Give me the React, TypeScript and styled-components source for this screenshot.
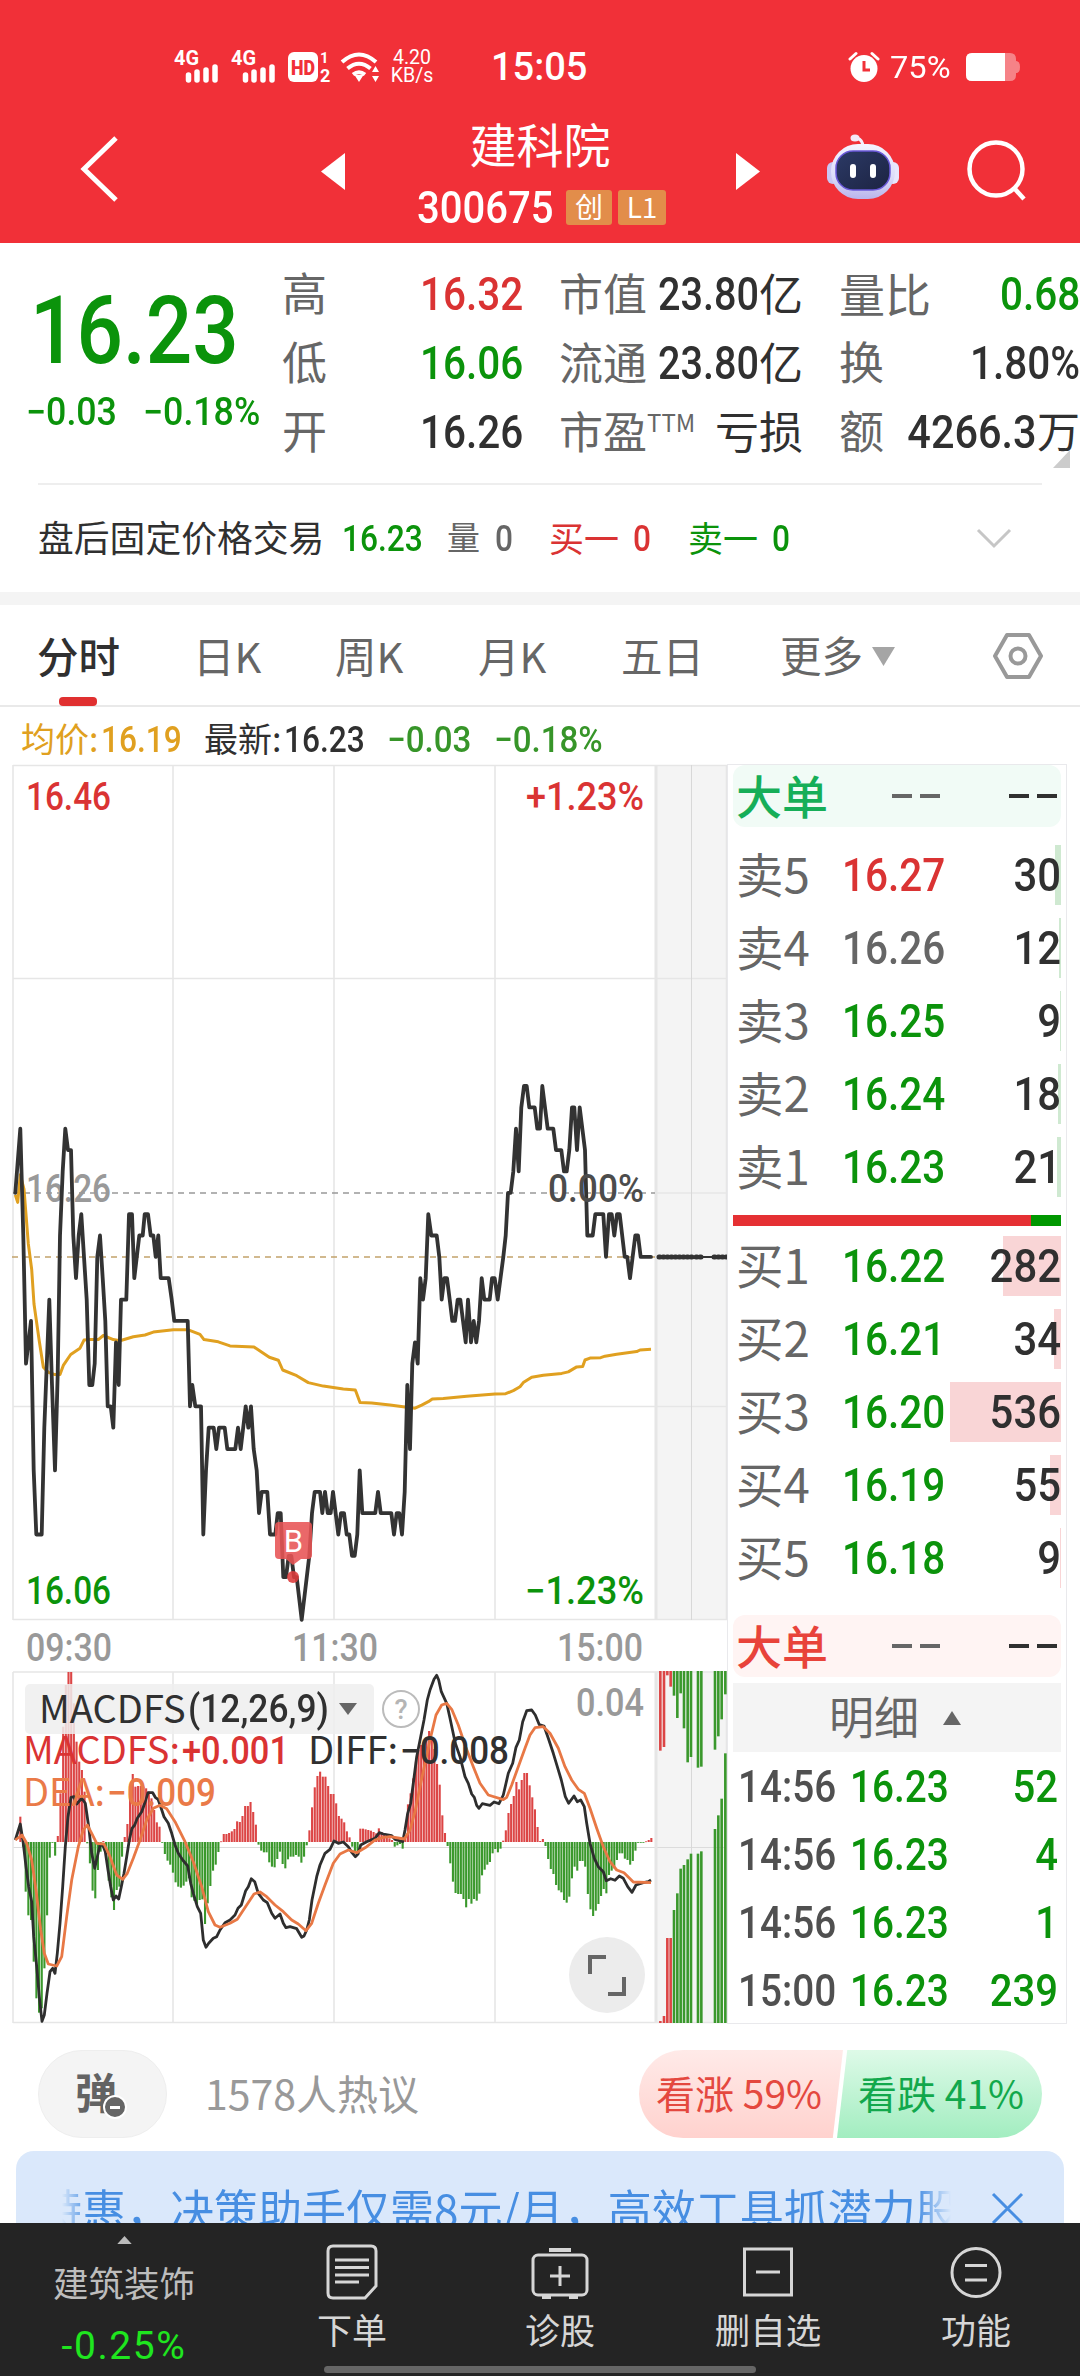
import React from "react";
import styled, { createGlobalStyle, css } from "styled-components";

const RED = "#da3333";
const GREEN = "#0b930b";
const INK = "#303030";
const GREY = "#666666";
const CJK = `"Noto Sans CJK SC", "Noto Sans", sans-serif`;
const NUM = `Roboto, "Noto Sans CJK SC", sans-serif`;

const Global = createGlobalStyle`
  * { box-sizing: border-box; }
  body { margin: 0; background: #fff; }
`;

const Page = styled.div`
  width: 1080px;
  height: 2376px;
  overflow: hidden;
  display: flex;
  flex-direction: column;
  background: #fff;
  color: ${INK};
  font-family: ${CJK};
  white-space: nowrap;
`;

/* ---------- text primitives ---------- */

type TextProps = { $size: number; $color?: string; $ml?: number; $weight?: number; $w?: number };

const Text = styled.span<TextProps>`
  display: block;
  flex: none;
  font-size: ${(p) => p.$size}px;
  line-height: 1;
  color: ${(p) => p.$color ?? "inherit"};
  margin-left: ${(p) => p.$ml ?? 0}px;
  font-weight: ${(p) => p.$weight ?? 400};
  transform: translateY(-0.05em);
  ${(p) => p.$w !== undefined && css`width: ${p.$w}px;`}
`;

const Num = styled(Text)<{ $right?: boolean; $stretch?: number }>`
  font-family: ${NUM};
  font-weight: ${(p) => p.$weight ?? 500};
  text-align: ${(p) => (p.$right ? "right" : "left")};
  transform: scaleX(${(p) => p.$stretch ?? 0.88});
  transform-origin: ${(p) => (p.$right ? "right" : "left")} center;
`;

/* ---------- header ---------- */

const Header = styled.header`
  flex: none;
  height: 243px;
  background: #f13038;
  color: #fff;
`;

const StatusBar = styled.div`
  display: flex;
  align-items: center;
  height: 97px;
  padding: 36px 0 0 172px;
`;

const NetSpeed = styled.div`
  display: flex;
  flex-direction: column;
  align-items: center;
  width: 46px;
  margin-left: 5px;
  font: 400 19.5px/18px Roboto, sans-serif;
`;

const NavBar = styled.div`
  display: flex;
  height: 146px;
  align-items: flex-start;
`;

const NavIcon = styled.svg<{ $ml: number; $mt: number }>`
  display: block;
  flex: none;
  margin: ${(p) => p.$mt}px 0 0 ${(p) => p.$ml}px;
`;

const TitleBlock = styled.div`
  width: 390px;
  height: 146px;
  display: flex;
  flex-direction: column;
  align-items: center;
  padding-top: 24px;
`;

const CodeLine = styled.div`
  display: flex;
  align-items: center;
  height: 36px;
  width: 248px;
  margin: 21px 0 0 2px;
`;

const Tag = styled.span<{ $w: number }>`
  flex: none;
  width: ${(p) => p.$w}px;
  height: 35px;
  margin-right: 6px;
  border-radius: 3px;
  background: #e28d4a;
  font-size: 28px;
  line-height: 33px;
  text-align: center;
`;

/* ---------- quote ---------- */

const Quote = styled.section`
  flex: none;
  height: 240px;
  display: flex;
  padding-top: 16px;
`;

const PriceBlock = styled.div`
  width: 280px;
  padding: 25px 0 0 26px;
  color: ${GREEN};
`;

const Deltas = styled.div`
  display: flex;
  margin-top: 15px;
`;

const StatColumn = styled.div<{ $w: number; $ml: number }>`
  width: ${(p) => p.$w}px;
  margin-left: ${(p) => p.$ml}px;
  flex: none;
`;

const StatRow = styled.div`
  height: 69px;
  display: flex;
  align-items: center;
  justify-content: space-between;
`;

const Pair = styled.div`
  display: flex;
  align-items: center;
`;

const Sup = styled.sup`
  font-size: 24px;
  line-height: 0;
  vertical-align: 17px;
  color: ${GREY};
`;

const CornerMark = styled.i`
  flex: none;
  align-self: flex-end;
  margin: 0 0 15px -27px;
  border-left: 17px solid transparent;
  border-bottom: 18px solid #ccc;
`;

const AfterHours = styled.section`
  flex: none;
  height: 109px;
  margin: 0 38px;
  border-top: 2px solid #eee;
  display: flex;
  align-items: center;
`;

const Band = styled.div`
  flex: none;
  height: 13px;
  background: #f4f4f4;
`;

/* ---------- tabs ---------- */

const Tabs = styled.nav`
  flex: none;
  height: 102px;
  border-bottom: 2px solid #e9e9e9;
  display: flex;
  padding-left: 37px;
`;

const Tab = styled.div<{ $w: number; $active?: boolean }>`
  width: ${(p) => p.$w}px;
  height: 101px;
  flex: none;
  font-size: 41.5px;
  line-height: 40px;
  color: ${(p) => (p.$active ? INK : GREY)};
  font-weight: ${(p) => (p.$active ? 500 : 400)};
  padding-top: 30px;
  &::after {
    content: "";
    display: ${(p) => (p.$active ? "block" : "none")};
    width: 38px;
    height: 9px;
    border-radius: 4px;
    margin: 22px 0 0 22px;
    background: #e03030;
  }
`;

const MoreTab = styled.div`
  display: flex;
  align-items: center;
  width: 213px;
  height: 103px;
`;

const Legend = styled.div`
  flex: none;
  height: 57px;
  display: flex;
  align-items: center;
  padding: 9px 0 0 21px;
`;

/* ---------- market body ---------- */

const Body = styled.main`
  flex: none;
  display: flex;
  height: 1259px;
`;

const Charts = styled.div`
  width: 727px;
  flex: none;
`;

const Canvas = styled.svg`
  display: block;
  text { font-family: ${NUM}; font-weight: 500; }
  text.word { font-family: ${CJK}; font-weight: 400; }
`;

const MacdBox = styled.div`
  position: relative;
`;

const IndicatorChip = styled.div`
  position: absolute;
  left: 25px;
  top: 13px;
  width: 349px;
  height: 50px;
  border-radius: 5px;
  background: rgba(238, 238, 238, 0.85);
  display: flex;
  align-items: center;
  padding-left: 14px;
`;

const ExpandButton = styled.button`
  position: absolute;
  left: 569px;
  top: 266px;
  width: 76px;
  height: 76px;
  padding: 0;
  border: 0;
  border-radius: 50%;
  background: #ececec;
`;

const Panel = styled.aside`
  width: 340px;
  height: 1260px;
  flex: none;
  border: 1px solid #e9e9ec;
  padding: 0 5px;
  display: flex;
  flex-direction: column;
`;

const BigOrder = styled.div<{ $tone: string; $bg: string; $mt: number }>`
  height: 62px;
  flex: none;
  margin-top: ${(p) => p.$mt}px;
  border-radius: 12px;
  background: ${(p) => p.$bg};
  color: ${(p) => p.$tone};
  display: flex;
  align-items: center;
  padding: 0 4px 0 3px;
`;

const Dashes = styled.span<{ $color: string; $ml: number }>`
  width: 48px;
  height: 4px;
  margin-left: ${(p) => p.$ml}px;
  background: linear-gradient(90deg, ${(p) => p.$color} 0 20px, transparent 20px 28px, ${(p) => p.$color} 28px);
`;

const Levels = styled.div<{ $mt: number }>`
  flex: none;
  margin-top: ${(p) => p.$mt}px;
`;

const Level = styled.div<{ $bar: number; $tone: string }>`
  height: 60px;
  margin-bottom: 13px;
  display: flex;
  align-items: center;
  padding-left: 3px;
  background: linear-gradient(${(p) => p.$tone}, ${(p) => p.$tone}) right / ${(p) => p.$bar}px 100% no-repeat;
`;

const Ratio = styled.div`
  flex: none;
  height: 11px;
  margin-top: 5px;
  background: linear-gradient(90deg, #e53033 0 298px, #009700 298px);
`;

const DetailHead = styled.div`
  flex: none;
  height: 69px;
  margin-top: 6px;
  background: #f4f4f4;
  color: ${GREY};
  display: flex;
  align-items: center;
  padding-left: 96px;
`;

const Tick = styled.div`
  flex: none;
  height: 68px;
  display: flex;
  align-items: center;
  padding: 2px 3px 0 5px;
`;

/* ---------- social and promo ---------- */

const Social = styled.section`
  flex: none;
  height: 128px;
  display: flex;
  padding: 27px 38px 0;
`;

const DanmuButton = styled.button`
  width: 129px;
  height: 88px;
  border: 1px solid #eee;
  border-radius: 44px;
  background: #f4f4f4;
  padding: 0 10px 6px 0;
  display: flex;
  align-items: center;
  justify-content: center;
  font: 700 42px/1 ${CJK};
  color: #636363;
`;

const MinusBadge = styled.i`
  width: 24px;
  height: 24px;
  margin: 32px -7px 0 -14px;
  border-radius: 50%;
  border: 2px solid #fff;
  background: linear-gradient(#fff, #fff) center / 10px 3px no-repeat, #666;
`;

const DiscussText = styled.span`
  margin-left: 38px;
  font-size: 41px;
  line-height: 84px;
  color: #999;
`;

const Votes = styled.div`
  display: flex;
  margin-left: auto;
  width: 403px;
  height: 88px;
`;

const Vote = styled.div<{ $up?: boolean }>`
  display: flex;
  align-items: center;
  flex: none;
  height: 88px;
  ${(p) =>
    p.$up
      ? css`
          width: 204px;
          padding-left: 17px;
          border-radius: 44px 0 0 44px;
          color: #e4483f;
          background: linear-gradient(#ffeae8, #ffd2ce);
          clip-path: polygon(0 0, 100% 0, 95% 100%, 0 100%);
        `
      : css`
          width: 205px;
          margin-left: -6px;
          padding-left: 21px;
          border-radius: 0 44px 44px 0;
          color: #12a84c;
          background: linear-gradient(#defae8, #a2edc0);
          clip-path: polygon(5% 0, 100% 0, 100% 100%, 0 100%);
        `}
`;

const Promo = styled.section`
  flex: none;
  height: 72px;
  margin: 0 16px;
  border-radius: 18px 18px 0 0;
  background: #dae8fb;
  display: flex;
  overflow: hidden;
`;

const Marquee = styled.div`
  width: 890px;
  height: 100px;
  margin: 35px 0 0 46px;
  overflow: hidden;
  display: flex;
  color: #478ee2;
  font-size: 44px;
  line-height: 44px;
  text-indent: -24px;
  mask-image: linear-gradient(90deg, transparent, #000 26px, #000 855px, transparent 889px);
`;

/* ---------- bottom bar ---------- */

const BottomBar = styled.footer`
  flex: none;
  height: 153px;
  background: #242424;
  color: #d6d6d6;
  display: flex;
  flex-direction: column;
  align-items: center;
`;

const BottomItems = styled.div`
  display: flex;
  width: 1080px;
  height: 143px;
`;

const Sector = styled.div`
  width: 248px;
  display: flex;
  flex-direction: column;
  align-items: center;
  padding-top: 13px;
  color: #bdbdbd;
`;

const SectorName = styled.span`
  margin: 20px 0 26px;
  font-size: 35.5px;
  line-height: 36px;
`;

const SectorChange = styled.span`
  font: 400 39px/40px Roboto, sans-serif;
  letter-spacing: 1.6px;
  color: #1fe61f;
`;

const Action = styled.div<{ $w: number }>`
  width: ${(p) => p.$w}px;
  display: flex;
  flex-direction: column;
  align-items: center;
  padding-top: 21px;
  svg { display: block; margin-bottom: 13px; }
`;

const HomeIndicator = styled.div`
  width: 432px;
  height: 7px;
  border-radius: 4px;
  background: #666;
`;

/* ---------- data ---------- */

type Pt = [number, number];
const pairs = (s: string): Pt[] =>
  s.trim().split(/\s+/).map((p) => p.split(",").map(Number) as Pt);

// x in thirds of a pixel, y in price ticks from the previous close
const PRICE = pairs(`46,0 61,3 70,-2 78,-8 93,-6 101,-13 109,-16 125,-16 133,-11 148,-5 156,-9 165,-13 173,-8.5 180,-2
188,1 196,3 204,2 213,2 220,-2 228,-4 236,-2 244,-1 252,-3 260,-5 268,-9 277,-9 284,-8 292,-3 300,-2 308,-4 316,-6
323,-10 332,-10 340,-11 348,-7 356,-9 363,-5 379,-5 387,-1 396,-1 403,-4 418,-2 428,-2 434,-1 444,-1 452,-2 460,-2
467,-3 475,-2 482,-4 506,-4 515,-5 523,-6 563,-6 570,-10 577,-9 586,-10 603,-10 610,-16 618,-13 626,-11 641,-11
649,-12 657,-11 674,-11 682,-12 706,-12 714,-11 722,-12 737,-10 745,-11 753,-10 761,-12 770,-13 777,-15 785,-14
802,-14 810,-16 826,-16 833,-15 842,-15 850,-18 858,-18 866,-17 874,-17 882,-18 890,-18 905,-20 928,-17 936,-15
944,-14 960,-14 967,-15 975,-14 983,-15 992,-15 999,-14 1015,-16 1023,-15 1032,-15 1040,-16 1048,-16 1056,-17
1064,-17 1072,-16 1079,-13 1087,-15 1126,-15 1134,-14 1142,-15 1174,-15 1182,-16 1190,-15 1198,-15 1206,-16 1214,-14
1222,-9 1230,-12 1237,-8 1245,-7 1253,-8 1261,-4 1269,-5 1277,-4 1285,-1 1294,-2 1310,-2 1318,-3 1325,-5 1333,-4
1341,-4 1349,-5 1357,-6 1365,-6 1373,-5 1381,-5 1397,-7 1404,-5 1413,-7 1421,-6 1429,-7 1437,-6 1445,-4 1453,-5
1469,-5 1476,-4 1484,-4 1493,-5 1510,-3 1517,-2 1524,0 1532,0 1540,1 1548,3 1556,1 1564,4 1572,5 1580,5 1588,4
1604,4 1612,3 1620,3 1627,5 1643,3 1660,3 1668,2 1684,2 1692,1 1700,1 1708,2 1716,4 1723,4 1731,2 1739,4 1755,2
1762,-2 1778,-2 1786,-1 1810,-1 1818,-3 1827,-1 1835,-1 1843,-2 1851,-1 1859,-1 1874,-3 1882,-3 1890,-4 1906,-2
1914,-2 1922,-3 1953,-3`);

const AVERAGE: Pt[] = [
  ...pairs(`46,775 53,788 61,740 72,765 85,860 95,905 102,965 118,1030 130,1075 145,1084 165,1088 180,1088 190,1072
212,1053 240,1042 252,1028 270,1027 295,1027 310,1020 340,1027 360,1029 400,1022 435,1019 460,1014 520,1010 565,1010
600,1018 612,1027 655,1031 690,1038 762,1040 780,1047 808,1058 835,1063 848,1080 890,1090 925,1102 970,1108 1030,1113
1066,1115`).map(([x, y]): Pt => [x, 750 + y / 1.742]),
  ...pairs(`18,893 30,921 65,922 120,928 165,933 195,936 215,928 235,919 247,912 280,911 350,905 435,899 467,898
490,890 510,880 520,869 545,855 580,850 635,845 655,841 680,828 698,827 705,810 720,805 752,804 765,800 800,795
860,788 870,784 903,782`).map(([x, y]): Pt => [x + 1050, 1050 + y / 2.613]),
];

const DIFF = pairs(`46,540 61,492 70,550 78,620 86,680 95,725 101,830 110,920 118,1010 126,1084 133,1065 141,1000
150,935 158,925 165,940 172,880 180,790 188,680 196,560 204,470 213,412 222,410 230,432 245,415 256,430 266,500
275,580 284,625 292,590 300,556 308,555 316,575 324,630 332,680 340,720 348,708 356,717 364,680 372,640 380,590
388,540 396,505 404,495 412,475 425,455 434,430 444,398 458,398 466,412 474,418 482,440 492,470 505,490 515,520
525,555 535,580 548,600 563,618 572,670 580,700 592,740 602,760 610,840 618,862 626,850 640,835 650,830 660,810
675,788 690,780 705,765 714,745 724,735 737,692 745,680 754,656 764,665 775,700 790,720 802,728 815,760 825,775
840,762 850,790 858,803 870,800 890,806 905,832 912,828 920,810 928,780 936,720 950,650 960,615 975,580 990,568
1002,543 1015,550 1030,546 1045,560 1056,578 1066,590 1074,582 1082,555 1100,545 1125,535 1138,518 1150,522 1175,527
1185,538 1208,545 1215,510 1223,460 1232,430 1240,370 1250,290 1262,230 1272,180 1282,120 1290,90 1302,58 1310,46
1316,60 1324,95 1340,130 1350,175 1366,250 1380,290 1395,350 1405,370 1415,402 1423,412 1430,436 1437,445 1447,431
1470,436 1482,426 1497,431 1510,405 1525,340 1538,310 1548,262 1558,240 1568,185 1580,152 1595,150 1606,165 1618,194
1632,198 1645,235 1660,280 1672,320 1684,360 1696,410 1706,430 1722,408 1732,425 1742,420 1753,440 1760,490 1770,550
1783,595 1795,620 1810,635 1819,662 1832,656 1845,661 1858,648 1870,655 1883,680 1896,697 1908,675 1930,668 1945,665
1953,660`);

const DEA = pairs(`46,540 66,525 80,550 95,600 108,690 122,810 133,880 145,912 170,918 185,890 200,770 215,660 235,560
250,510 262,495 275,520 290,550 312,552 330,590 350,645 368,658 382,640 400,595 420,540 440,480 460,445 480,436
500,446 525,485 555,545 580,605 605,680 625,755 645,795 660,802 690,790 712,778 740,735 762,702 780,696 800,710
825,735 850,755 875,780 895,792 918,812 935,790 955,730 975,675 1000,610 1020,582 1045,570 1070,578 1100,560 1125,540
1150,532 1170,530 1213,537 1230,510 1245,455 1260,380 1275,310 1290,240 1308,165 1325,135 1340,130 1355,148 1375,195
1395,255 1420,320 1440,370 1465,405 1510,419 1520,412 1535,375 1555,320 1575,265 1590,225 1605,203 1630,200 1650,220
1675,265 1695,320 1715,360 1735,388 1753,400 1770,445 1790,505 1810,560 1830,605 1850,630 1872,638 1900,666 1953,668`);

const HIST_AM = `470 560 695 766 780 905 1015 1058 1045 925 766 593 548 587 528 400 200 75 36 36 130 245 305 330 395
550 610 692 715 630 575 543 575 662 712 750 690 680 590 531 492 396 342 380 378 378 380 385 395 415 450 487 500 548
582 602 614 638 667 680 683 677 665 655 712 722 732 720 718 792 730 678 632 614 576 544 522 522 519 514 507 484 486
468 438 438 426 456 494 554 572 577 577 607 620 622 597 575 612 625 598 590 590 585 590 608 590 556 511 442 382 348
335 350 350 378 402 402 430 468 476 487 514 532 560 580 574`.split(/\s+/).map(Number);
const HIST_PM = `506 506 508 510 512 516 520 505 516 520 530 535 540 560 556 552 566 530 433 400 355 305 270 255 247 240
213 232 267 312 374 466 519 558 610 665 699 702 702 717 742 717 731 717 722 701 646 629 614 606 580 567 577 566 542
511 459 432 408 366 388 360 339 339 376 412 448 501 543 537 558 597 627 642 675 691 697 720 728 710 655 620 632 603
603 620 702 748 768 752 732 708 687 700 645 632 625 600 580 580 596 600 614 603 572 548 548 548 544 540 534`
  .split(/\s+/).map(Number);

const HIST: Pt[] = [
  ...HIST_AM.map((y, i): Pt => [61 + i * 8.03, y]),
  ...HIST_PM.map((y, i): Pt => [1081 + (i * 873) / (HIST_PM.length - 1), y]),
];

// x, end of the upper bar, start of the lower bar
const AFTER_BARS = [
  [931, 272, 1083], [942, 261, 1068], [952, 46, 834], [962, 80, 834], [972, 107, 750], [982, 174, 700], [992, 100, 626],
  [1002, 205, 615], [1013, 307, 598], [1023, 291, 581], [1044, 323, 581], [1054, 320, 574], [1095, 269, 507],
  [1105, 229, 466], [1115, 178, 416], [1126, 103, 280],
];

const pts = (a: Pt[], fy: (y: number) => number) => a.map(([x, y]) => `${(x / 3).toFixed(1)},${fy(y).toFixed(1)}`).join(" ");

const Label = (p: { x: number; y: number; w: number; word?: boolean; fill: string; children: string }) => (
  <text className={p.word ? "word" : undefined} x={p.x} y={p.y} fontSize={38} fill={p.fill} textLength={p.w} lengthAdjust="spacingAndGlyphs">
    {p.children}
  </text>
);

const GRID = "#e6e6e6";

function PriceChart() {
  return (
    <Canvas width="727" height="907" viewBox="0 764 727 907">
      <rect x="655" y="765" width="72" height="855" fill="#f4f4f4" />
      <g stroke={GRID} strokeWidth="1.6" fill="none">
        <path d="M13 765.5H727M13 978.5H727M655 1193H727M13 1406.5H727M13 1619.5H727" />
        <path d="M13 765V1620M173 765V1620M334 765V1620M495 765V1620M726.5 765V1620" />
        <path d="M656 765V1620" strokeWidth="3" />
        <path d="M691.5 765V1620" stroke="#d8d8d8" strokeWidth="1" />
      </g>
      <path d="M13 1193H655" stroke="#999" strokeWidth="1.5" strokeDasharray="6 5" />
      <path d="M12 1257H655" stroke="#c2a26b" strokeWidth="1.5" strokeDasharray="6 5" />
      <Label x={26} y={1202} w={85} fill="#999">16.26</Label>
      <polyline points={pts(AVERAGE, (y) => y)} fill="none" stroke="#e0a020" strokeWidth="3" strokeLinejoin="round" />
      <polyline points={pts(PRICE, (n) => 1192.8 - n * 21.355)} fill="none" stroke="#333" strokeWidth="3.8" strokeLinejoin="round" strokeLinecap="round" />
      <path d="M658 1257H727" stroke="#333" strokeWidth="2" />
      <path d="M659 1257H692M696 1257H703M714 1257H727" stroke="#333" strokeWidth="5" strokeLinecap="round" strokeDasharray="1 3" />
      <Label x={26} y={810} w={85} fill={RED}>16.46</Label>
      <Label x={526} y={810} w={118} fill={RED}>+1.23%</Label>
      <Label x={548} y={1202} w={96} fill="#4c4c4c">0.00%</Label>
      <Label x={26} y={1604} w={85} fill={GREEN}>16.06</Label>
      <Label x={525} y={1604} w={119} fill={GREEN}>−1.23%</Label>
      <Label x={26} y={1661} w={86} fill="#999">09:30</Label>
      <Label x={292} y={1661} w={86} fill="#999">11:30</Label>
      <Label x={557} y={1661} w={86} fill="#999">15:00</Label>
      <g opacity="0.88">
        <path d="M279 1522H308Q312 1522 312 1526V1555Q312 1559 308 1559H301L293 1565L286 1559H279Q275 1559 275 1555V1526Q275 1522 279 1522Z" fill="#e85455" />
        <circle cx="293" cy="1577" r="6" fill="#dd3b3b" />
      </g>
      <text x="293.5" y="1552" textAnchor="middle" fontSize="31" fill="#fff" style={{ fontWeight: 400 }}>B</text>
    </Canvas>
  );
}

function MacdChart() {
  const y = (v: number) => 1660 + v / 3;
  return (
    <MacdBox>
      <Canvas width="727" height="353" viewBox="0 1671 727 353">
        <rect x="655" y="1671" width="72" height="352" fill="#f4f4f4" />
        <g stroke={GRID} strokeWidth="1.6" fill="none">
          <path d="M13 1672H727M13 2022.5H727" />
          <path d="M13 1847.5H727" stroke="#dcdcdc" strokeWidth="1" />
          <path d="M13 1672V2023M173 1672V2023M334 1672V2023M495 1672V2023M726.5 1672V2023" />
          <path d="M656 1672V2023" strokeWidth="3" />
          <path d="M691.5 1672V2023" stroke="#d8d8d8" strokeWidth="1" />
        </g>
        <text x="401" y="1719" textAnchor="middle" fontSize="27" fill="#b5b5b5">?</text>
        <circle cx="401" cy="1709" r="18" fill="none" stroke="#bbb" strokeWidth="2" />
        <Label x={576} y={1716} w={68} fill="#999">0.04</Label>
        {HIST.map(([x, v], i) => (
          <rect
            key={i}
            x={x / 3 - 1.05}
            width="2.1"
            y={y(Math.min(v, 546))}
            height={Math.max(0.8, Math.abs(v - 546) / 3)}
            fill={v < 546 ? "#dc4545" : "#3a982c"}
          />
        ))}
        {AFTER_BARS.map(([x, top, low], i) => (
          <g key={x} fill={i < 4 ? "#dc4545" : "#3a982c"}>
            <rect x={350 + x / 3 - 1.3} width="2.6" y={1671} height={y(top) - 1671} />
            <rect x={350 + x / 3 - 1.3} width="2.6" y={y(low)} height={2023 - y(low)} />
          </g>
        ))}
        <polyline points={pts(DIFF, y)} fill="none" stroke="#2e2e2e" strokeWidth="2.8" strokeLinejoin="round" />
        <polyline points={pts(DEA, y)} fill="none" stroke="#e87845" strokeWidth="2.8" strokeLinejoin="round" />
        <Label x={23} y={1764} w={157} fill={RED} word>MACDFS:</Label>
        <Label x={182} y={1764} w={107} fill={RED}>+0.001</Label>
        <Label x={308} y={1764} w={90} fill={INK} word>DIFF:</Label>
        <Label x={400} y={1764} w={109} fill={INK}>−0.008</Label>
        <Label x={23} y={1806} w={82} fill="#ea7a48" word>DEA:</Label>
        <Label x={107} y={1806} w={109} fill="#ea7a48">−0.009</Label>
      </Canvas>
      <IndicatorChip>
        <Text $size={38} $w={149}>MACDFS</Text>
        <Num $size={38} $w={151} $stretch={0.93}>(12,26,9)</Num>
        <svg width="18" height="12" viewBox="0 0 18 12"><path d="M0 0H18L9 12Z" fill="#666" /></svg>
      </IndicatorChip>
      <ExpandButton>
        <svg width="76" height="76" viewBox="0 0 76 76" fill="none" stroke="#666" strokeWidth="4">
          <path d="M21 37V20H37M55 40V57H39" />
        </svg>
      </ExpandButton>
    </MacdBox>
  );
}

const SELLS = [
  { n: 5, price: "16.27", vol: "30", bar: 6, color: RED },
  { n: 4, price: "16.26", vol: "12", bar: 2, color: GREY },
  { n: 3, price: "16.25", vol: "9", bar: 1, color: GREEN },
  { n: 2, price: "16.24", vol: "18", bar: 3, color: GREEN },
  { n: 1, price: "16.23", vol: "21", bar: 4, color: GREEN },
];
const BUYS = [
  { n: 1, price: "16.22", vol: "282", bar: 58, color: GREEN },
  { n: 2, price: "16.21", vol: "34", bar: 7, color: GREEN },
  { n: 3, price: "16.20", vol: "536", bar: 111, color: GREEN },
  { n: 4, price: "16.19", vol: "55", bar: 11, color: GREEN },
  { n: 5, price: "16.18", vol: "9", bar: 1, color: GREEN },
];
const TICKS = [["14:56", "52"], ["14:56", "4"], ["14:56", "1"], ["15:00", "239"]];

function Book({ side, rows, tone, mt }: { side: string; rows: typeof SELLS; tone: string; mt: number }) {
  return (
    <Levels $mt={mt}>
      {rows.map((r) => (
        <Level key={r.n} $bar={r.bar} $tone={tone}>
          <Text $size={47.5} $w={106} $color={GREY}>{side}{r.n}</Text>
          <Num $size={46} $w={110} $color={r.color}>{r.price}</Num>
          <Num $size={46} $w={109} $right $stretch={0.91}>{r.vol}</Num>
        </Level>
      ))}
    </Levels>
  );
}

function BigOrderRow({ tone, bg, mt }: { tone: string; bg: string; mt: number }) {
  return (
    <BigOrder $tone={tone} $bg={bg} $mt={mt}>
      <Text $size={46} $w={92} $weight={500}>大单</Text>
      <Dashes $color="#666" $ml={64} />
      <Dashes $color={INK} $ml={69} />
    </BigOrder>
  );
}

function OrderPanel() {
  return (
    <Panel>
      <BigOrderRow tone="#16ae58" bg="#f1fbf6" mt={0} />
      <Book side="卖" rows={SELLS} tone="#cfe9d1" mt={18} />
      <Ratio />
      <Book side="买" rows={BUYS} tone="#f9d5d6" mt={10} />
      <BigOrderRow tone="#e8433a" bg="#fff4f3" mt={14} />
      <DetailHead>
        <Text $size={45} $w={114}>明细</Text>
        <svg width="18" height="14" viewBox="0 0 18 14"><path d="M0 14H18L9 0Z" fill="#666" /></svg>
      </DetailHead>
      {TICKS.map(([time, vol], i) => (
        <Tick key={i}>
          <Num $size={44} $w={112} $color="#505050">{time}</Num>
          <Num $size={44} $w={104} $color={GREEN}>16.23</Num>
          <Num $size={44} $w={104} $color={GREEN} $right $stretch={0.91}>{vol}</Num>
        </Tick>
      ))}
    </Panel>
  );
}

function StatusIcons() {
  const signal = (x: number) => (
    <g>
      <text x={x} y="28" fontSize="20" fontWeight="700" textLength="25" lengthAdjust="spacingAndGlyphs">4G</text>
      <path d={`M${x + 14.5} 43v-5M${x + 23} 43v-8M${x + 32} 43v-10M${x + 41} 43v-13`} stroke="#fff" strokeWidth="5.5" strokeLinecap="round" />
    </g>
  );
  return (
    <svg width="212" height="60" viewBox="0 0 212 60" fill="#fff" fontFamily="Roboto, sans-serif">
      {signal(2)}
      {signal(59)}
      <rect x="116" y="15" width="30" height="30" rx="6" />
      <text x="119" y="37.5" fontSize="20" fontWeight="900" fill="#f13038" textLength="24" lengthAdjust="spacingAndGlyphs">HD</text>
      <text x="148" y="26" fontSize="15" fontWeight="700">1</text>
      <text x="148" y="45" fontSize="18" fontWeight="700">2</text>
      <g fill="none" stroke="#fff" strokeWidth="4" transform="translate(0,-2)">
        <path d="M170 27Q187 12 204 27M175.5 33.5Q187 24 198.5 33.5" />
        <path d="M181 39.5Q187 35 193 39.5" />
      </g>
      <path d="M182.5 38L187 45L191.5 38ZM200 35L203.5 29L207 35ZM200 39L203.5 45L207 39Z" />
    </svg>
  );
}

function Robot() {
  return (
    <NavIcon $ml={66} $mt={36} width="74" height="70" viewBox="0 0 74 70">
      <defs>
        <linearGradient id="shell" x1="0" y1="0" x2="0" y2="1">
          <stop offset="0" stopColor="#f4f4ff" /><stop offset="0.6" stopColor="#dcdcf8" /><stop offset="1" stopColor="#b9b4ec" />
        </linearGradient>
        <linearGradient id="visor" x1="0" y1="0" x2="1" y2="1">
          <stop offset="0" stopColor="#2c3a66" /><stop offset="1" stopColor="#1c2342" />
        </linearGradient>
      </defs>
      <path d="M37 14Q37 7 31 5" fill="none" stroke="#f5eefa" strokeWidth="3" strokeLinecap="round" />
      <ellipse cx="29" cy="5" rx="4.5" ry="3.5" fill="#f3e8f7" />
      <rect x="1" y="29" width="12" height="22" rx="6" fill="#c9c7f3" />
      <rect x="61" y="29" width="12" height="22" rx="6" fill="#e7e6fc" />
      <rect x="5" y="11" width="64" height="55" rx="27" fill="url(#shell)" />
      <rect x="10" y="18" width="54" height="39" rx="17" fill="url(#visor)" stroke="#6a58d8" strokeWidth="1.5" />
      <rect x="24" y="31" width="6" height="14" rx="3" fill="#fff" />
      <rect x="44" y="31" width="6" height="14" rx="3" fill="#fff" />
    </NavIcon>
  );
}

export default function App() {
  return (
    <Page>
      <Global />
      <Header>
        <StatusBar>
          <StatusIcons />
          <NetSpeed><span>4.20</span><span>KB/s</span></NetSpeed>
          <Num $size={38} $w={357} $ml={56} $stretch={1}>15:05</Num>
          <svg width="32" height="32" viewBox="0 0 32 32">
            <circle cx="16" cy="17.5" r="13.5" fill="#fff" />
            <path d="M2 8L8 2.5M30 8L24 2.5" stroke="#fff" strokeWidth="3" strokeLinecap="round" />
            <path d="M16 10V19H22" fill="none" stroke="#f13038" strokeWidth="3" />
          </svg>
          <Num $size={32} $w={76} $ml={10} $weight={400} $stretch={1.02}>75%</Num>
          <svg width="54" height="28" viewBox="0 0 54 28">
            <path d="M6 0H44Q50 0 50 6V8Q54 8 54 14Q54 20 50 20V22Q50 28 44 28H6Q0 28 0 22V6Q0 0 6 0Z" fill="#fff" opacity="0.4" />
            <path d="M6 0H39V28H6Q0 28 0 22V6Q0 0 6 0Z" fill="#fff" />
          </svg>
        </StatusBar>
        <NavBar>
          <NavIcon $ml={78} $mt={38} width="44" height="68" viewBox="0 0 44 68">
            <path d="M38 3L6 34L38 65" fill="none" stroke="#fff" strokeWidth="5" />
          </NavIcon>
          <NavIcon $ml={199} $mt={56} width="24" height="37" viewBox="0 0 24 37"><path d="M24 0V37L0 18.5Z" fill="#fff" /></NavIcon>
          <TitleBlock>
            <Text $size={47}>建科院</Text>
            <CodeLine>
              <Num $size={45} $w={149} $stretch={0.89}>300675</Num>
              <Tag $w={46}>创</Tag>
              <Tag $w={48}>L1</Tag>
            </CodeLine>
          </TitleBlock>
          <NavIcon $ml={1} $mt={56} width="24" height="37" viewBox="0 0 24 37"><path d="M0 0V37L24 18.5Z" fill="#fff" /></NavIcon>
          <Robot />
          <NavIcon $ml={66} $mt={42} width="64" height="64" viewBox="0 0 64 64" fill="none" stroke="#fff" strokeWidth="4.5">
            <circle cx="30" cy="30" r="26.5" /><path d="M48 49L58 60" />
          </NavIcon>
        </NavBar>
      </Header>

      <Quote>
        <PriceBlock>
          <Num $size={94} $ml={4} $stretch={0.87}>16.23</Num>
          <Deltas>
            <Num $size={38} $w={117} $stretch={0.94}>−0.03</Num>
            <Num $size={38} $stretch={0.94}>−0.18%</Num>
          </Deltas>
        </PriceBlock>
        <StatColumn $w={241} $ml={2}>
          {[["高", "16.32", RED], ["低", "16.06", GREEN], ["开", "16.26", INK]].map(([k, v, c]) => (
            <StatRow key={k}><Text $size={45} $color={GREY}>{k}</Text><Num $size={46} $color={c} $right>{v}</Num></StatRow>
          ))}
        </StatColumn>
        <StatColumn $w={244} $ml={36}>
          {["市值", "流通"].map((k) => (
            <StatRow key={k}>
              <Text $size={44} $color={GREY}>{k}</Text>
              <Pair><Num $size={46} $w={101} $stretch={0.86}>23.80</Num><Text $size={44}>亿</Text></Pair>
            </StatRow>
          ))}
          <StatRow><Text $size={44} $color={GREY}>市盈<Sup>TTM</Sup></Text><Text $size={44}>亏损</Text></StatRow>
        </StatColumn>
        <StatColumn $w={241} $ml={36}>
          <StatRow><Text $size={46} $color={GREY}>量比</Text><Num $size={46} $color={GREEN} $right>0.68</Num></StatRow>
          <StatRow><Text $size={45} $color={GREY}>换</Text><Num $size={46} $right>1.80%</Num></StatRow>
          <StatRow>
            <Text $size={45} $color={GREY}>额</Text>
            <Pair><Num $size={46} $right $stretch={0.9}>4266.3</Num><Text $size={43}>万</Text></Pair>
          </StatRow>
        </StatColumn>
        <CornerMark />
      </Quote>

      <AfterHours>
        <Text $size={35.8} $w={304}>盘后固定价格交易</Text>
        <Num $size={36} $w={105}  $color={GREEN}>16.23</Num>
        <Text $size={33} $w={48} $color={GREY}>量</Text>
        <Num $size={36} $w={54} $color={GREY}>0</Num>
        <Text $size={35} $w={84} $color={RED}>买一</Text>
        <Num $size={36} $w={55} $color={RED}>0</Num>
        <Text $size={35} $w={84} $color={GREEN}>卖一</Text>
        <Num $size={36} $w={204} $color={GREEN}>0</Num>
        <svg width="36" height="22" viewBox="0 0 36 22"><path d="M2 2L18 18L34 2" fill="none" stroke="#c6c6c6" strokeWidth="3" /></svg>
      </AfterHours>
      <Band />

      <Tabs>
        <Tab $w={156} $active>分时</Tab>
        <Tab $w={142}>日K</Tab>
        <Tab $w={143}>周K</Tab>
        <Tab $w={143}>月K</Tab>
        <Tab $w={159}>五日</Tab>
        <MoreTab>
          <Text $size={41.5} $w={92} $color={GREY}>更多</Text>
          <svg width="23" height="19" viewBox="0 0 23 19"><path d="M0 0H23L11.5 19Z" fill="#a5a5a5" /></svg>
        </MoreTab>
        <NavIcon $ml={0} $mt={27} width="50" height="48" viewBox="0 0 50 48" fill="none" stroke="#999" strokeWidth="4" strokeLinejoin="round">
          <path d="M14 3H36L48 24L36 45H14L2 24Z" /><circle cx="25" cy="24" r="7.5" />
        </NavIcon>
      </Tabs>

      <Legend>
        <Text $size={34} $color="#e0a020" $w={80}>均价:</Text>
        <Num $size={36} $w={103} $color="#e0a020">16.19</Num>
        <Text $size={34} $w={80}>最新:</Text>
        <Num $size={36} $w={103}>16.23</Num>
        <Num $size={36} $w={107} $color="#379529" $stretch={0.92}>−0.03</Num>
        <Num $size={36} $color="#379529" $stretch={0.92}>−0.18%</Num>
      </Legend>

      <Body>
        <Charts>
          <PriceChart />
          <MacdChart />
        </Charts>
        <OrderPanel />
      </Body>

      <Social>
        <DanmuButton>弹<MinusBadge /></DanmuButton>
        <DiscussText>1578人热议</DiscussText>
        <Votes>
          <Vote $up><Text $size={39}>看涨 59%</Text></Vote>
          <Vote><Text $size={39}>看跌 41%</Text></Vote>
        </Votes>
      </Social>

      <Promo>
        <Marquee>特惠，决策助手仅需8元/月，高效工具抓潜力股</Marquee>
        <NavIcon $ml={39} $mt={41} width="33" height="33" viewBox="0 0 33 33">
          <path d="M2 2L31 31M31 2L2 31" stroke="#478ee2" strokeWidth="3" />
        </NavIcon>
      </Promo>

      <BottomBar>
        <BottomItems>
          <Sector>
            <svg width="27" height="15" viewBox="0 0 27 15"><path d="M0 15H27L13.5 0Z" fill="#bbb" /></svg>
            <SectorName>建筑装饰</SectorName>
            <SectorChange>-0.25%</SectorChange>
          </Sector>
          <Action $w={208}>
            <svg width="52" height="56" viewBox="0 0 52 56" fill="none" stroke="#d6d6d6" strokeWidth="3">
              <path d="M7 2H45Q50 2 50 7V42L39 54H7Q2 54 2 49V7Q2 2 7 2Z" />
              <path d="M9 16H43M9 23.5H43M9 31H43M9 38H33" />
            </svg>
            <Text $size={35}>下单</Text>
          </Action>
          <Action $w={208}>
            <svg width="60" height="56" viewBox="0 0 60 56" fill="none" stroke="#d6d6d6" strokeWidth="3">
              <path d="M19 6H41M12 53H21M39 53H48" strokeWidth="4" />
              <rect x="3" y="11" width="54" height="40" rx="5" /><path d="M30 22V42M20 32H40" />
            </svg>
            <Text $size={35}>诊股</Text>
          </Action>
          <Action $w={208}>
            <svg width="52" height="56" viewBox="0 0 52 56" fill="none" stroke="#d6d6d6" strokeWidth="3">
              <rect x="2.5" y="5" width="47" height="46" /><path d="M14 28H38" />
            </svg>
            <Text $size={35.5}>删自选</Text>
          </Action>
          <Action $w={208}>
            <svg width="54" height="56" viewBox="0 0 54 56" fill="none" stroke="#d6d6d6" strokeWidth="3">
              <circle cx="27" cy="28.5" r="24" /><path d="M16 21.5H38M16 36H38" />
            </svg>
            <Text $size={35}>功能</Text>
          </Action>
        </BottomItems>
        <HomeIndicator />
      </BottomBar>
    </Page>
  );
}
